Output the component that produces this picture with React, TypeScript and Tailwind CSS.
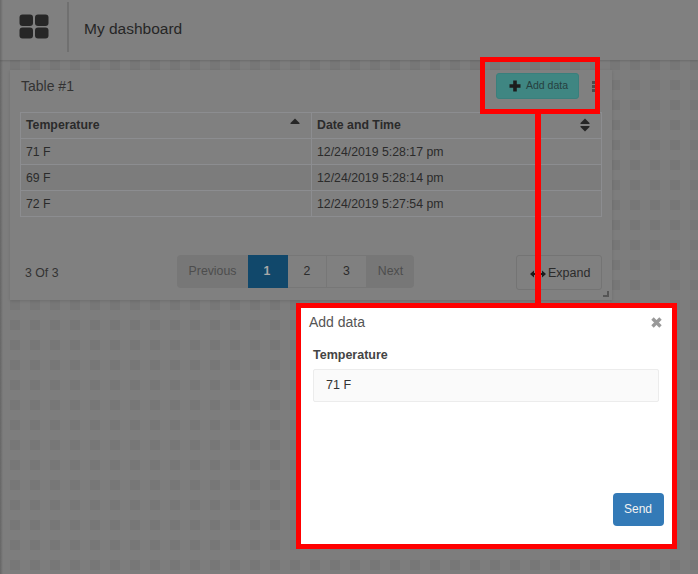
import React from 'react';

const rows = [
  { temp: '71 F', date: '12/24/2019 5:28:17 pm', shade: false },
  { temp: '69 F', date: '12/24/2019 5:28:14 pm', shade: true },
  { temp: '72 F', date: '12/24/2019 5:27:54 pm', shade: false },
];

function Logo() {
  return (
    <svg width="30" height="25" viewBox="0 0 30 25" fill="#262626">
      <rect x="0.5" y="0.5" width="13.5" height="11.5" rx="3" />
      <rect x="16" y="0.5" width="13.5" height="11.5" rx="3" />
      <rect x="0.5" y="13.5" width="13.5" height="11" rx="3" />
      <rect x="16" y="13.5" width="13.5" height="11" rx="3" />
    </svg>
  );
}

function SortIcon({ up = true, down = true }: { up?: boolean; down?: boolean }) {
  return (
    <svg width="10" height="14" viewBox="0 0 10 14" fill="#262626">
      {up && <path d="M5 0.5 L9.5 5 Q10 6 9 6 H1 Q0 6 0.5 5 Z" />}
      {down && <path d="M5 13.5 L9.5 9 Q10 8 9 8 H1 Q0 8 0.5 9 Z" />}
    </svg>
  );
}

function ExpandIcon() {
  return (
    <svg width="16" height="8" viewBox="0 0 16 8" fill="#1c1c1c">
      <path d="M0 4 L4 0.5 V3 H12 V0.5 L16 4 L12 7.5 V5 H4 V7.5 Z" />
    </svg>
  );
}

function PlusIcon() {
  return (
    <svg width="12" height="12" viewBox="0 0 12 12" fill="#1c1c1c">
      <path d="M4.2 0.5 H7.8 V4.2 H11.5 V7.8 H7.8 V11.5 H4.2 V7.8 H0.5 V4.2 H4.2 Z" />
    </svg>
  );
}

function CloseIcon() {
  return (
    <svg width="11" height="11" viewBox="0 0 11 11" stroke="#999999" strokeWidth="3.4">
      <path d="M1.5 1.5 L9.5 9.5 M9.5 1.5 L1.5 9.5" />
    </svg>
  );
}

export default function App() {
  return (
    <div
      className="relative w-[698px] h-[574px] overflow-hidden bg-[conic-gradient(#777777_25%,#7d7d7d_0)] bg-[length:20px_20px] font-['Liberation_Sans',sans-serif] text-[#1c1c1c]"
    >
      {/* header */}
      <div className="flex items-center h-[60px] bg-[#808080] shadow-[0_1px_2px_rgba(0,0,0,0.15)]">
        <div className="flex items-center justify-center w-[69px] h-[50px] -mt-[7px] border-r-2 border-[#707070]">
          <Logo />
        </div>
        <span className="ml-[15px] -mt-[2px] text-[15.5px] text-[#262626]">My dashboard</span>
      </div>

      {/* table card */}
      <div className="relative mt-[10px] ml-[10px] w-[602px] h-[230px] bg-[#808080] shadow-[0_1px_3px_rgba(0,0,0,0.12)] px-[10px]">
        <div className="flex items-start justify-between h-[42px]">
          <span className="mt-[6px] ml-[1px] text-[14px] text-[#333333]">Table #1</span>
          <div className="flex mt-[3px] mr-[7px] gap-[13px]">
            <button className="flex items-center h-[26px] w-[83px] pl-[12px] rounded-[3px] border border-[#3a7f7c] bg-[#3f8682] text-[#263f3f] text-[10.5px]">
              <span className="mr-[5px]"><PlusIcon /></span>
              Add data
            </button>
            <div className="flex flex-col gap-[1px] mt-[8px]">
              <span className="w-[3px] h-[3px] bg-[#4d4d4d]" />
              <span className="w-[3px] h-[3px] bg-[#4d4d4d]" />
              <span className="w-[3px] h-[3px] bg-[#4d4d4d]" />
            </div>
          </div>
        </div>

        <table className="w-[582px] border-collapse table-fixed text-[12.3px]">
          <thead>
            <tr className="h-[26px]">
              <th className="relative w-[291px] border border-[#8c8d90] text-left pl-[5px] pb-[1px] font-bold text-[#2b2b2b]">
                <div className="flex items-center justify-between pr-[11px]">
                  Temperature
                  <SortIcon down={false} />
                </div>
              </th>
              <th className="border border-[#8c8d90] text-left pl-[5px] pb-[1px] font-bold text-[#2b2b2b]">
                <div className="flex items-center justify-between pr-[11px]">
                  Date and Time
                  <SortIcon />
                </div>
              </th>
            </tr>
          </thead>
          <tbody>
            {rows.map((r) => (
              <tr key={r.date} className={`h-[26px] ${r.shade ? 'bg-[#7c7c7c]' : ''}`}>
                <td className="border border-[#8c8d90] pl-[5px] pt-[1px] text-[#2b2b2b]">{r.temp}</td>
                <td className="border border-[#8c8d90] pl-[5px] pt-[1px] text-[#2b2b2b]">{r.date}</td>
              </tr>
            ))}
          </tbody>
        </table>

        <div className="relative flex items-start justify-between mt-[38px]">
          <span className="mt-[9px] ml-[5px] text-[12.3px] text-[#333333]">3 Of 3</span>
          <div className="absolute left-[157px] top-0 flex h-[33px] text-[12.3px]">
            <span className="flex items-center justify-center w-[71px] rounded-l-[4px] bg-[#777777] text-[#4d4d4d]">Previous</span>
            <span className="flex items-center justify-center w-[40px] pr-[2px] bg-[#11486b] text-[#a8a8a8] font-bold">1</span>
            <span className="flex items-center justify-center w-[39px] border-y border-r border-[#777777] text-[#2b2b2b]">2</span>
            <span className="flex items-center justify-center w-[40px] border-y border-r border-[#777777] text-[#2b2b2b]">3</span>
            <span className="flex items-center justify-center w-[47px] rounded-r-[4px] bg-[#777777] text-[#4d4d4d]">Next</span>
          </div>
          <button className="flex items-center pt-[2px] pl-[13px] gap-[2px] w-[86px] h-[35px] rounded-[3px] border border-[#747474] text-[12.5px] text-[#2b2b2b]">
            <ExpandIcon />
            Expand
          </button>
        </div>
        <span className="absolute right-[3px] bottom-[3px] w-[6px] h-[6px] border-r-2 border-b-2 border-[#555555]" />
      </div>

      {/* modal */}
      <div className="absolute left-[301px] top-[308px] w-[372px] h-[236px] bg-white">
        <div className="flex items-center justify-between pl-[8px] pr-[11px] pt-[4px]">
          <span className="text-[14px] text-[#555555]">Add data</span>
          <CloseIcon />
        </div>
        <div className="pl-[12px] pr-[14px] mt-[13px]">
          <label className="block text-[12.5px] font-bold text-[#444444]">Temperature</label>
          <div className="flex items-center h-[33px] mt-[4px] pl-[12px] bg-[#fafafa] border border-[#ececec] rounded-[2px] text-[12.5px] text-[#333333]">
            71 F
          </div>
        </div>
        <button className="absolute right-[9px] bottom-[18px] w-[51px] h-[33px] rounded-[4px] bg-[#337ab7] text-[#f2f2f2] text-[12px] pb-[1px] pr-[1px]">
          Send
        </button>
      </div>

      {/* red annotations */}
      <div className="absolute left-[480px] top-[57px] w-[120px] h-[57px] border-[5px] border-[#ff0000]" />
      <div className="absolute left-[535px] top-[114px] w-[6px] h-[190px] bg-[#ff0000]" />
      <div className="absolute left-[296px] top-[303px] w-[381px] h-[246px] border-[5px] border-[#ff0000]" />
      {/* left edge shade */}
      <div className="absolute left-0 top-0 w-[3px] h-full bg-gradient-to-r from-[#00000030] to-transparent" />
    </div>
  );
}
